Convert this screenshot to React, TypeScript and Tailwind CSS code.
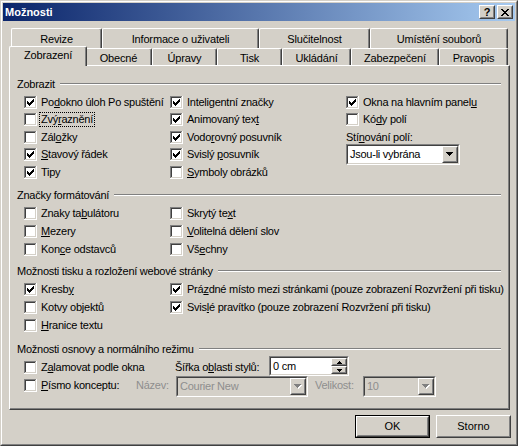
import type { ReactNode } from "react";

// classic 3D edges
const raised =
  "border border-t-white border-l-white border-r-[#404040] border-b-[#404040]";
const raisedInner =
  "border border-t-[#d4d0c8] border-l-[#d4d0c8] border-r-[#808080] border-b-[#808080]";
const sunken =
  "border border-t-[#808080] border-l-[#808080] border-r-white border-b-white";
const sunkenInner =
  "border border-t-[#404040] border-l-[#404040] border-r-[#d4d0c8] border-b-[#d4d0c8]";

const tabBase =
  "bg-[#d4d0c8] border-l border-t border-r border-l-white border-t-white border-r-[#404040] shadow-[inset_-1px_0_0_#808080] rounded-tl-[2px] rounded-tr-[2px] flex justify-center";

type Row = [number, number, number];

const checkRects: Row[] = [
  [9, 3, 1],
  [8, 4, 2],
  [3, 5, 1],
  [7, 5, 3],
  [3, 6, 2],
  [6, 6, 3],
  [3, 7, 5],
  [4, 8, 3],
  [5, 9, 1],
];

const arrowRects: Row[] = [
  [0, 0, 7],
  [1, 1, 5],
  [2, 2, 3],
  [3, 3, 1],
];

const closeRects: Row[] = [
  [0, 0, 2],
  [6, 0, 2],
  [1, 1, 2],
  [5, 1, 2],
  [2, 2, 4],
  [3, 3, 2],
  [2, 4, 4],
  [1, 5, 2],
  [5, 5, 2],
  [0, 6, 2],
  [6, 6, 2],
];

// "&" marks the accelerator letter
const Accel = ({ text }: { text: string }) => {
  const i = text.indexOf("&");
  if (i < 0) return <>{text}</>;
  return (
    <>
      {text.slice(0, i)}
      <span className="underline">{text[i + 1]}</span>
      {text.slice(i + 2)}
    </>
  );
};

const CheckBox = ({ checked }: { checked?: boolean }) => (
  <svg
    width="13"
    height="13"
    viewBox="0 0 13 13"
    shapeRendering="crispEdges"
    className="shrink-0"
  >
    <rect width="13" height="13" fill="#fff" />
    <rect width="12" height="1" fill="#808080" />
    <rect width="1" height="12" fill="#808080" />
    <rect x="1" y="1" width="10" height="1" fill="#404040" />
    <rect x="1" y="1" width="1" height="10" fill="#404040" />
    <rect x="1" y="11" width="11" height="1" fill="#d4d0c8" />
    <rect x="11" y="1" width="1" height="11" fill="#d4d0c8" />
    {checked &&
      checkRects.map(([x, y, w]) => (
        <rect key={`${x}-${y}`} x={x} y={y} width={w} height="1" fill="#000" />
      ))}
  </svg>
);

const Check = ({
  label,
  checked,
  focus,
  className = "",
}: {
  label: string;
  checked?: boolean;
  focus?: boolean;
  className?: string;
}) => (
  <div className={`flex items-center ${className}`}>
    <CheckBox checked={checked} />
    {focus ? (
      <span className="ml-[2px] border border-dotted border-black px-px">
        <Accel text={label} />
      </span>
    ) : (
      <span className="ml-[4px] whitespace-nowrap">
        <Accel text={label} />
      </span>
    )}
  </div>
);

const GroupTitle = ({ title, className = "" }: { title: string; className?: string }) => (
  <div className={`flex h-[18px] items-center pl-[7px] pr-[8px] ${className}`}>
    <span className="whitespace-nowrap">{title}</span>
    <div className="ml-[5px] flex-1 border-t border-b border-t-[#808080] border-b-white" />
  </div>
);

const DropArrow = ({ disabled }: { disabled?: boolean }) => (
  <svg width="8" height="5" viewBox="0 0 8 5" shapeRendering="crispEdges">
    {disabled &&
      arrowRects.map(([x, y, w]) => (
        <rect key={`s${y}`} x={x + 1} y={y + 1} width={w} height="1" fill="#fff" />
      ))}
    {arrowRects.map(([x, y, w]) => (
      <rect
        key={y}
        x={x}
        y={y}
        width={w}
        height="1"
        fill={disabled ? "#808080" : "#000"}
      />
    ))}
  </svg>
);

const Combo = ({
  value,
  className,
  disabled,
}: {
  value: string;
  className: string;
  disabled?: boolean;
}) => (
  <div className={`${sunken} h-[21px] shrink-0 ${className}`}>
    <div
      className={`${sunkenInner} flex h-full ${
        disabled ? "bg-[#d4d0c8] text-[#8e8e8e]" : "bg-white"
      }`}
    >
      <span className="flex flex-1 items-center pl-[2px] whitespace-nowrap">{value}</span>
      <div className={`${raised} h-full w-[16px] bg-[#d4d0c8]`}>
        <div className={`${raisedInner} flex h-full items-center justify-center`}>
          <DropArrow disabled={disabled} />
        </div>
      </div>
    </div>
  </div>
);

const SpinButton = ({ up }: { up?: boolean }) => (
  <div className={`${raised} h-[8px] w-[16px] bg-[#d4d0c8]`}>
    <div className={`${raisedInner} flex h-full items-center justify-center`}>
      <svg width="5" height="3" viewBox="0 0 5 3" shapeRendering="crispEdges">
        {up ? (
          <path d="M2 0h1v1h1v1h1v1H0V2h1V1h1z" fill="#000" />
        ) : (
          <path d="M0 0h5v1H4v1H3v1H2V2H1V1H0z" fill="#000" />
        )}
      </svg>
    </div>
  </div>
);

const Spin = ({ value }: { value: string }) => (
  <div className={`${sunken} h-[20px] w-[80px] shrink-0 self-start -mt-[2px]`}>
    <div className={`${sunkenInner} flex h-full bg-white`}>
      <span className="flex flex-1 items-center pl-[2px]">{value}</span>
      <div className="flex flex-col">
        <SpinButton up />
        <SpinButton />
      </div>
    </div>
  </div>
);

const CaptionButton = ({ children }: { children: ReactNode }) => (
  <div className={`${raised} h-[14px] w-[16px] bg-[#d4d0c8]`}>
    <div className={`${raisedInner} flex h-full items-center justify-center`}>
      {children}
    </div>
  </div>
);

const TitleBar = () => (
  <div className="flex h-[18px] shrink-0 items-center bg-linear-to-r/srgb from-[#0a246a] to-[#a6caf0] pl-[2px] pr-[2px]">
    <span className="text-[11px] font-bold tracking-normal text-white">Možnosti</span>
    <div className="ml-auto flex gap-[2px]">
      <CaptionButton>
        <span className="text-[11px] leading-[10px] font-bold tracking-normal">?</span>
      </CaptionButton>
      <CaptionButton>
        <svg width="8" height="7" viewBox="0 0 8 7" shapeRendering="crispEdges">
          {closeRects.map(([x, y, w]) => (
            <rect key={`${x}-${y}`} x={x} y={y} width={w} height="1" fill="#000" />
          ))}
        </svg>
      </CaptionButton>
    </div>
  </div>
);

const backTabs = [
  { label: "Revize", w: "w-[91px]" },
  { label: "Informace o uživateli", w: "w-[157px]" },
  { label: "Slučitelnost", w: "w-[111px]" },
  { label: "Umístění souborů", w: "w-[138px]" },
];

const frontTabs = [
  { label: "Zobrazení", w: "w-[74px]", active: true },
  { label: "Obecné", w: "w-[67px]" },
  { label: "Úpravy", w: "w-[65px]" },
  { label: "Tisk", w: "w-[65px]" },
  { label: "Ukládání", w: "w-[69px]" },
  { label: "Zabezpečení", w: "w-[88px]" },
  { label: "Pravopis", w: "w-[69px]" },
];

const Tabs = () => (
  <div className="pl-[2px] tracking-[-0.15px]">
    <div className="flex h-[20px]">
      {backTabs.map((t) => (
        <div key={t.label} className={`${tabBase} ${t.w} h-full pt-[4px]`}>
          {t.label}
        </div>
      ))}
    </div>
    <div className="flex h-[17px]">
      {frontTabs.map((t) =>
        t.active ? (
          <div
            key={t.label}
            className={`${tabBase} relative z-10 -mt-[2px] -mr-[2px] -ml-[2px] h-[20px] w-[78px] pt-[2px]`}
          >
            {t.label}
          </div>
        ) : (
          <div key={t.label} className={`${tabBase} ${t.w} h-full pt-[3px]`}>
            {t.label}
          </div>
        ),
      )}
    </div>
  </div>
);

const g1Heights = ["h-[18px]", "h-[17px]", "h-[18px]", "h-[17px]", "h-[18px]"];

const Panel = () => (
  <div className="h-[345px] w-[501px] border border-t-white border-l-white border-r-[#404040] border-b-[#404040] pt-[9px] tracking-[-0.25px] shadow-[inset_-1px_-1px_0_#808080]">
    {/* Zobrazit */}
    <GroupTitle title="Zobrazit" />
    <div className="flex pl-[14px]">
      <div className="flex w-[146px] flex-col">
        <Check className={g1Heights[0]} label="Po&dokno úloh Po spuštění" checked />
        <Check className={g1Heights[1]} label="Zvý&raznění" focus />
        <Check className={g1Heights[2]} label="Zál&ožky" />
        <Check className={g1Heights[3]} label="&Stavový řádek" checked />
        <Check className={g1Heights[4]} label="Tipy" checked />
      </div>
      <div className="flex w-[176px] flex-col">
        <Check className={g1Heights[0]} label="Inteli&gentní značky" checked />
        <Check className={g1Heights[1]} label="Animovaný tex&t" checked />
        <Check className={g1Heights[2]} label="Vodo&rovný posuvník" checked />
        <Check className={g1Heights[3]} label="Svislý &posuvník" checked />
        <Check className={g1Heights[4]} label="&Symboly obrázků" />
      </div>
      <div className="flex flex-col">
        <Check className={g1Heights[0]} label="Okna na hlavním panel&u" checked />
        <Check className={g1Heights[1]} label="Kó&dy polí" />
        <div className={`flex items-center ${g1Heights[2]}`}>
          <Accel text="Stí&nování polí:" />
        </div>
        <Combo value="Jsou-li vybrána" className="-mt-[2px] w-[114px]" />
      </div>
    </div>

    {/* Značky formátování */}
    <GroupTitle title="Značky formátování" className="mt-[5px]" />
    <div className="flex pl-[14px]">
      <div className="flex w-[146px] flex-col">
        <Check className="h-[18px]" label="Znaky ta&bulátoru" />
        <Check className="h-[18px]" label="&Mezery" />
        <Check className="h-[18px]" label="Kon&ce odstavců" />
      </div>
      <div className="flex flex-col">
        <Check className="h-[18px]" label="Skrytý te&xt" />
        <Check className="h-[18px]" label="&Volitelná dělení slov" />
        <Check className="h-[18px]" label="Vš&echny" />
      </div>
    </div>

    {/* Možnosti tisku */}
    <GroupTitle title="Možnosti tisku a rozložení webové stránky" className="mt-[4px]" />
    <div className="flex pl-[14px]">
      <div className="flex w-[146px] flex-col">
        <Check className="h-[18px]" label="Kresb&y" checked />
        <Check className="h-[18px]" label="Kotvy ob&jektů" />
        <Check className="h-[18px]" label="&Hranice textu" />
      </div>
      <div className="flex flex-col">
        <Check
          className="h-[18px]"
          label="Prá&zdné místo mezi stránkami (pouze zobrazení Rozvržení při tisku)"
          checked
        />
        <Check
          className="h-[18px]"
          label="Svis&lé pravítko (pouze zobrazení Rozvržení při tisku)"
          checked
        />
      </div>
    </div>

    {/* Možnosti osnovy */}
    <GroupTitle title="Možnosti osnovy a normálního režimu" className="mt-[6px]" />
    <div className="flex flex-col pl-[14px]">
      <div className="flex h-[18px] items-center">
        <Check className="h-full w-[151px]" label="Z&alamovat podle okna" />
        <span className="w-[94px] whitespace-nowrap">
          <Accel text="Šířka o&blasti stylů:" />
        </span>
        <Spin value="0 cm" />
      </div>
      <div className="flex h-[18px] items-center">
        <Check className="h-full w-[112px]" label="&Písmo konceptu:" />
        <span className="w-[40px] text-[#8e8e8e]">Název:</span>
        <Combo value="Courier New" className="self-start w-[132px]" disabled />
        <span className="ml-[7px] w-[48px] text-[#8e8e8e]">Velikost:</span>
        <Combo value="10" className="self-start w-[73px]" disabled />
      </div>
    </div>
  </div>
);

const Buttons = () => (
  <div className="mt-[5px] flex w-[502px] justify-end gap-[6px]">
    <div className="h-[23px] w-[75px] border border-black">
      <div className={`${raised} h-full`}>
        <div className={`${raisedInner} flex h-full items-center justify-center`}>OK</div>
      </div>
    </div>
    <div className={`${raised} h-[23px] w-[75px]`}>
      <div className={`${raisedInner} flex h-full items-center justify-center`}>Storno</div>
    </div>
  </div>
);

export default function App() {
  return (
    <div className="h-[446px] w-[518px] border border-t-[#d4d0c8] border-l-[#d4d0c8] border-r-[#404040] border-b-[#404040] bg-[#d4d0c8] font-['Liberation_Sans',sans-serif] text-[11px] leading-[13px] text-black">
      <div className="flex h-full flex-col border border-t-white border-l-white border-r-[#808080] border-b-[#808080] p-px">
        <TitleBar />
        <div className="pt-[7px] pl-[6px]">
          <Tabs />
          <Panel />
          <Buttons />
        </div>
      </div>
    </div>
  );
}
